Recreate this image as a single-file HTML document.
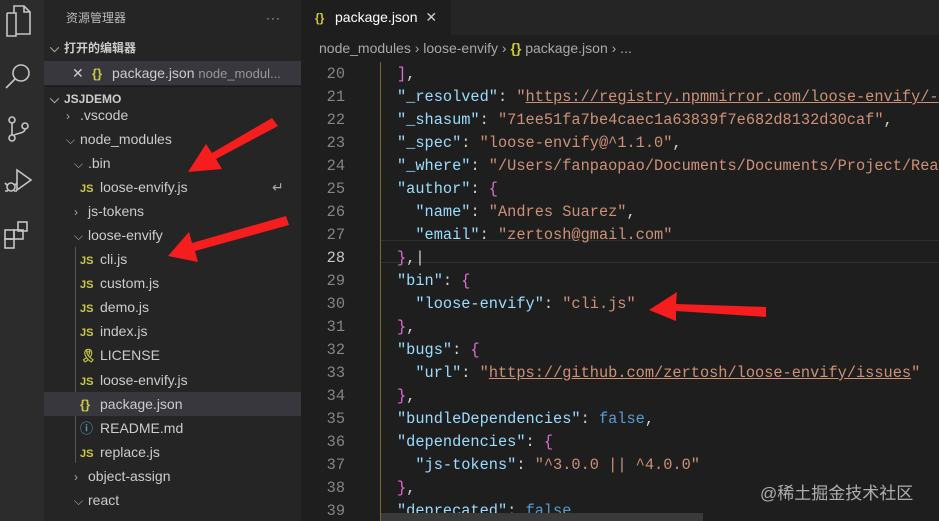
<!DOCTYPE html>
<html><head><meta charset="utf-8"><style>
*{margin:0;padding:0;box-sizing:border-box}
body{width:939px;height:521px;overflow:hidden;background:#1e1e1e;position:relative;font-family:"Liberation Sans","Noto Sans CJK SC",sans-serif}
#act{position:absolute;left:0;top:0;width:44px;height:521px;background:#2c2c2c}
#side{position:absolute;left:44px;top:0;width:257px;height:521px;background:#252526;color:#ccc;font-size:14px}
.r{position:absolute;left:0;width:257px;height:24px;line-height:24px;white-space:nowrap}
.js{color:#cbcb41;font-weight:bold;font-size:11px;display:inline-block;width:20px}
.br{color:#cbcb41;font-weight:bold;display:inline-block;width:20px;font-size:13px}
.ch{color:#aaa;display:inline-block;width:14px;font-size:12px}
#tabs{position:absolute;left:301px;top:0;width:638px;height:35px;background:#252526}
#tab{position:absolute;left:0;top:0;width:150px;height:35px;background:#1e1e1e;color:#fff;font-size:14px;line-height:35px;padding-left:14px}
#bc{position:absolute;left:301px;top:35px;width:638px;height:27px;background:#1e1e1e;color:#a9a9a9;font-size:14px;line-height:27px;padding-left:18px}
#code{position:absolute;left:301px;top:62px;width:638px;height:459px;font-family:"Liberation Mono",monospace;font-size:15.3px;overflow:hidden}
.l{position:absolute;left:0;height:23px;line-height:23px;white-space:pre;width:638px}
.n{position:absolute;left:0;width:44px;text-align:right;color:#858585}
.c{position:absolute;left:96px;color:#d4d4d4}
.k{color:#9cdcfe}.s{color:#ce9178}.b{color:#569cd6}.p{color:#da70d6}.y{color:#ffd700}
.u{text-decoration:underline}
</style></head><body>
<div id="act">
<svg width="44" height="260" viewBox="0 0 44 260" fill="none" stroke="#c5c5c5" stroke-width="1.6">
<path d="M7 13h9v21h14v-22l-6-6h-10v7M16 13v23h-9v-23"/><path d="M24 6v6h6"/>
<circle cx="21" cy="73" r="8"/><path d="M15 79l-9 9"/>
<circle cx="12" cy="120" r="3"/><circle cx="12" cy="138" r="3"/><circle cx="25" cy="126" r="3"/><path d="M12 123v12M25 129c0 5-10 4-12 7"/>
<path d="M17 170l14 10-14 10z"/><circle cx="11" cy="187" r="4"/><path d="M5 183l2 2M17 183l-2 2M5 191h3M14 191h3"/>
<rect x="5" y="230" width="9" height="9"/><rect x="14" y="230" width="9" height="9"/><rect x="5" y="239" width="9" height="9"/><rect x="18" y="222" width="9" height="9"/>
</svg>
</div>
<div id="side">
<div class="r" style="top:6px;padding-left:22px;font-size:12px;color:#bbb">资源管理器<span style="position:absolute;left:222px;letter-spacing:1px">···</span></div>
<div class="r" style="top:36px;padding-left:6px;font-size:12px;font-weight:bold"><span class="ch">⌵</span>打开的编辑器</div>
<div class="r" style="top:61px;background:#37373d;padding-left:28px"><span style="color:#ccc;display:inline-block;width:20px">✕</span><span class="br">{}</span>package.json <span style="color:#999;font-size:13px">node_modul...</span></div>
<div class="r" style="top:86px;padding-left:6px;font-size:12px;font-weight:bold;border-top:1px solid #1a1a1a"><span class="ch">⌵</span>JSJDEMO</div>
<div class="r" style="top:103px;padding-left:22px"><span class="ch">›</span>.vscode</div>
<div class="r" style="top:127px;padding-left:22px"><span class="ch">⌵</span>node_modules</div>
<div class="r" style="top:151px;padding-left:30px"><span class="ch">⌵</span>.bin</div>
<div class="r" style="top:175px;padding-left:36px"><span class="js">JS</span>loose-envify.js<span style="position:absolute;left:228px;color:#aaa">↵</span></div>
<div class="r" style="top:199px;padding-left:30px"><span class="ch">›</span>js-tokens</div>
<div class="r" style="top:223px;padding-left:30px"><span class="ch">⌵</span>loose-envify</div>
<div style="position:absolute;left:31px;top:247px;width:1px;height:216px;background:#555"></div>
<div class="r" style="top:247px;padding-left:36px"><span class="js">JS</span>cli.js</div>
<div class="r" style="top:271px;padding-left:36px"><span class="js">JS</span>custom.js</div>
<div class="r" style="top:295px;padding-left:36px"><span class="js">JS</span>demo.js</div>
<div class="r" style="top:319px;padding-left:36px"><span class="js">JS</span>index.js</div>
<div class="r" style="top:343px;padding-left:36px"><span class="js" style="font-size:13px">🎗</span>LICENSE</div>
<div class="r" style="top:368px;padding-left:36px"><span class="js">JS</span>loose-envify.js</div>
<div class="r" style="top:392px;padding-left:36px;background:#37373d"><span class="br">{}</span>package.json</div>
<div class="r" style="top:416px;padding-left:36px"><span class="js" style="color:#519aba;font-size:13px">ⓘ</span>README.md</div>
<div class="r" style="top:440px;padding-left:36px"><span class="js">JS</span>replace.js</div>
<div class="r" style="top:464px;padding-left:30px"><span class="ch">›</span>object-assign</div>
<div class="r" style="top:488px;padding-left:30px"><span class="ch">⌵</span>react</div>
</div>
<div id="tabs"><div id="tab"><span class="br" style="font-size:12px">{}</span>package.json <span style="color:#ccc;margin-left:4px">✕</span></div></div>
<div id="bc">node_modules › loose-envify › <span style="color:#cbcb41;font-weight:bold">{}</span> package.json › ...</div>
<div id="code">
<div style="position:absolute;left:79px;top:0;width:1px;height:459px;background:#7a6a2a"></div>
<div style="position:absolute;left:80px;top:178px;width:558px;height:23px;border-top:1px solid #303030;border-bottom:1px solid #303030"></div>
<div class="l" style="top:1px"><span class="n">20</span><span class="c"><span class="p">]</span>,</span></div>
<div class="l" style="top:24px"><span class="n">21</span><span class="c"><span class="k">"_resolved"</span>: <span class="s">"<span class="u">https://registry.npmmirror.com/loose-envify/-</span></span></span></div>
<div class="l" style="top:47px"><span class="n">22</span><span class="c"><span class="k">"_shasum"</span>: <span class="s">"71ee51fa7be4caec1a63839f7e682d8132d30caf"</span>,</span></div>
<div class="l" style="top:70px"><span class="n">23</span><span class="c"><span class="k">"_spec"</span>: <span class="s">"loose-envify@^1.1.0"</span>,</span></div>
<div class="l" style="top:93px"><span class="n">24</span><span class="c"><span class="k">"_where"</span>: <span class="s">"/Users/fanpaopao/Documents/Documents/Project/Rea</span></span></div>
<div class="l" style="top:116px"><span class="n">25</span><span class="c"><span class="k">"author"</span>: <span class="p">{</span></span></div>
<div class="l" style="top:139px"><span class="n">26</span><span class="c">  <span class="k">"name"</span>: <span class="s">"Andres Suarez"</span>,</span></div>
<div class="l" style="top:162px"><span class="n">27</span><span class="c">  <span class="k">"email"</span>: <span class="s">"zertosh@gmail.com"</span></span></div>
<div class="l" style="top:185px"><span class="n" style="color:#c6c6c6">28</span><span class="c"><span class="p">}</span>,|</span></div>
<div class="l" style="top:208px"><span class="n">29</span><span class="c"><span class="k">"bin"</span>: <span class="p">{</span></span></div>
<div class="l" style="top:231px"><span class="n">30</span><span class="c">  <span class="k">"loose-envify"</span>: <span class="s">"cli.js"</span></span></div>
<div class="l" style="top:254px"><span class="n">31</span><span class="c"><span class="p">}</span>,</span></div>
<div class="l" style="top:277px"><span class="n">32</span><span class="c"><span class="k">"bugs"</span>: <span class="p">{</span></span></div>
<div class="l" style="top:300px"><span class="n">33</span><span class="c">  <span class="k">"url"</span>: <span class="s">"<span class="u">https://github.com/zertosh/loose-envify/issues</span>"</span></span></div>
<div class="l" style="top:323px"><span class="n">34</span><span class="c"><span class="p">}</span>,</span></div>
<div class="l" style="top:346px"><span class="n">35</span><span class="c"><span class="k">"bundleDependencies"</span>: <span class="b">false</span>,</span></div>
<div class="l" style="top:369px"><span class="n">36</span><span class="c"><span class="k">"dependencies"</span>: <span class="p">{</span></span></div>
<div class="l" style="top:392px"><span class="n">37</span><span class="c">  <span class="k">"js-tokens"</span>: <span class="s">"^3.0.0 || ^4.0.0"</span></span></div>
<div class="l" style="top:415px"><span class="n">38</span><span class="c"><span class="p">}</span>,</span></div>
<div class="l" style="top:438px"><span class="n">39</span><span class="c"><span class="k">"deprecated"</span>: <span class="b">false</span>,</span></div>
<div style="position:absolute;left:80px;top:451px;width:322px;height:8px;background:#3a3a3a"></div>
</div>
<div style="position:absolute;left:760px;top:479px;color:#c8c8c8;font-size:17px;opacity:.85">@稀土掘金技术社区</div>
<svg style="position:absolute;left:0;top:0" width="939" height="521">
<g fill="#f51d1d">
<path d="M272 118l6 8-62 33 6 10-34 3 18-28 6 9z"/>
<path d="M286 216l3 9-94 26 3 11-30-6 21-24 3 11z"/>
<path d="M766 307l0 10-90-6v10l-27-11 28-18-1 12z"/>
</g>
</svg>
</body></html>
